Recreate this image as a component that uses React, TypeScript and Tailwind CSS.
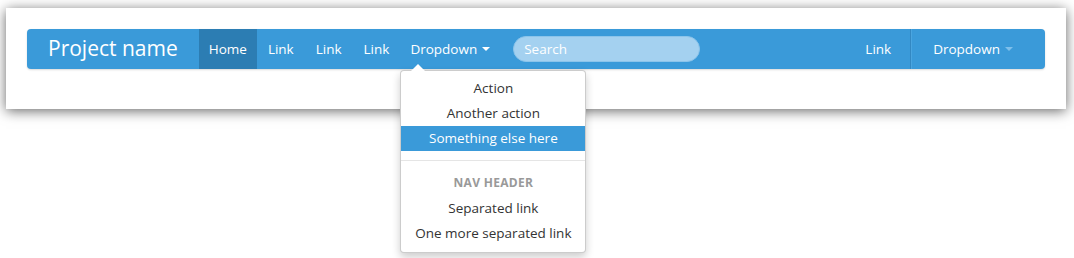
const font = { fontFamily: '"Open Sans", "Noto Sans", sans-serif' }

function Caret({ light }: { light?: boolean }) {
  return (
    <span
      className={
        'ml-[5px] inline-block h-0 w-0 border-x-[4px] border-t-[4px] border-x-transparent align-middle ' +
        (light ? 'border-t-[#7fc0ec]' : 'border-t-white')
      }
    />
  )
}

function Menu() {
  const item = 'block text-center text-[13.5px] leading-[25px] text-[#333]'
  const lower = 'block text-center text-[13.5px] leading-[25.5px] text-[#333]'
  return (
    <div className="absolute left-0 top-[41px] z-10 w-[186px] rounded-[4px] border border-black/20 bg-white py-[5px] shadow-[0_4px_8px_rgba(0,0,0,0.2)]">
      <span className="absolute -top-[7px] left-[10px] h-0 w-0 border-x-[7px] border-b-[7px] border-x-transparent border-b-white" />
      <a className={item}>Action</a>
      <a className={item}>Another action</a>
      <a className={item + ' bg-[#3a9ad9] text-white'}>Something else here</a>
      <div className="my-[9px] h-px bg-[#e5e5e5]" />
      <div className="text-center text-[12px] font-bold uppercase leading-[25.5px] tracking-[0.3px] text-[#999]">Nav header</div>
      <a className={lower}>Separated link</a>
      <a className={lower}>One more separated link</a>
    </div>
  )
}

export default function App() {
  return (
    <div className="h-[258px] w-[1074px] bg-white pl-[6px] pt-[8px]" style={font}>
      <div className="w-[1060px] bg-white px-[21px] pb-[40px] pt-[21px] shadow-[0_2px_12px_rgba(0,0,0,0.6)]">
        <div className="flex h-[40px] items-stretch rounded-[4px] bg-[#3a9ad9] shadow-[0_1px_2px_rgba(0,0,0,0.15)]">
          <a className="flex items-center pl-[21px] pr-[21px] text-[21px] text-white">Project name</a>
          <ul className="flex items-stretch text-[13.5px] text-white">
            <li className="flex items-center bg-[#2c7db3] px-[10px]">Home</li>
            <li className="flex items-center px-[11px]">Link</li>
            <li className="flex items-center px-[11px]">Link</li>
            <li className="flex items-center px-[11px]">Link</li>
            <li className="relative flex items-center px-[10px]">
              Dropdown
              <Caret />
              <Menu />
            </li>
          </ul>
          <div className="ml-[13px] flex items-center">
            <input
              placeholder="Search"
              className="h-[26px] w-[187px] rounded-full border border-[#8cc4ea] bg-[#a4d1f0] px-[10px] text-[13.5px] text-white outline-none placeholder:text-white"
            />
          </div>
          <ul className="ml-auto mr-[20px] flex items-stretch text-[13.5px] text-white">
            <li className="flex items-center px-[10px]">Link</li>
            <li className="mx-[9px] w-[2px] border-l border-[#3388c2] bg-[#4aa5e0]" />
            <li className="flex items-center px-[12px]">
              Dropdown
              <Caret light />
            </li>
          </ul>
        </div>
      </div>
    </div>
  )
}
